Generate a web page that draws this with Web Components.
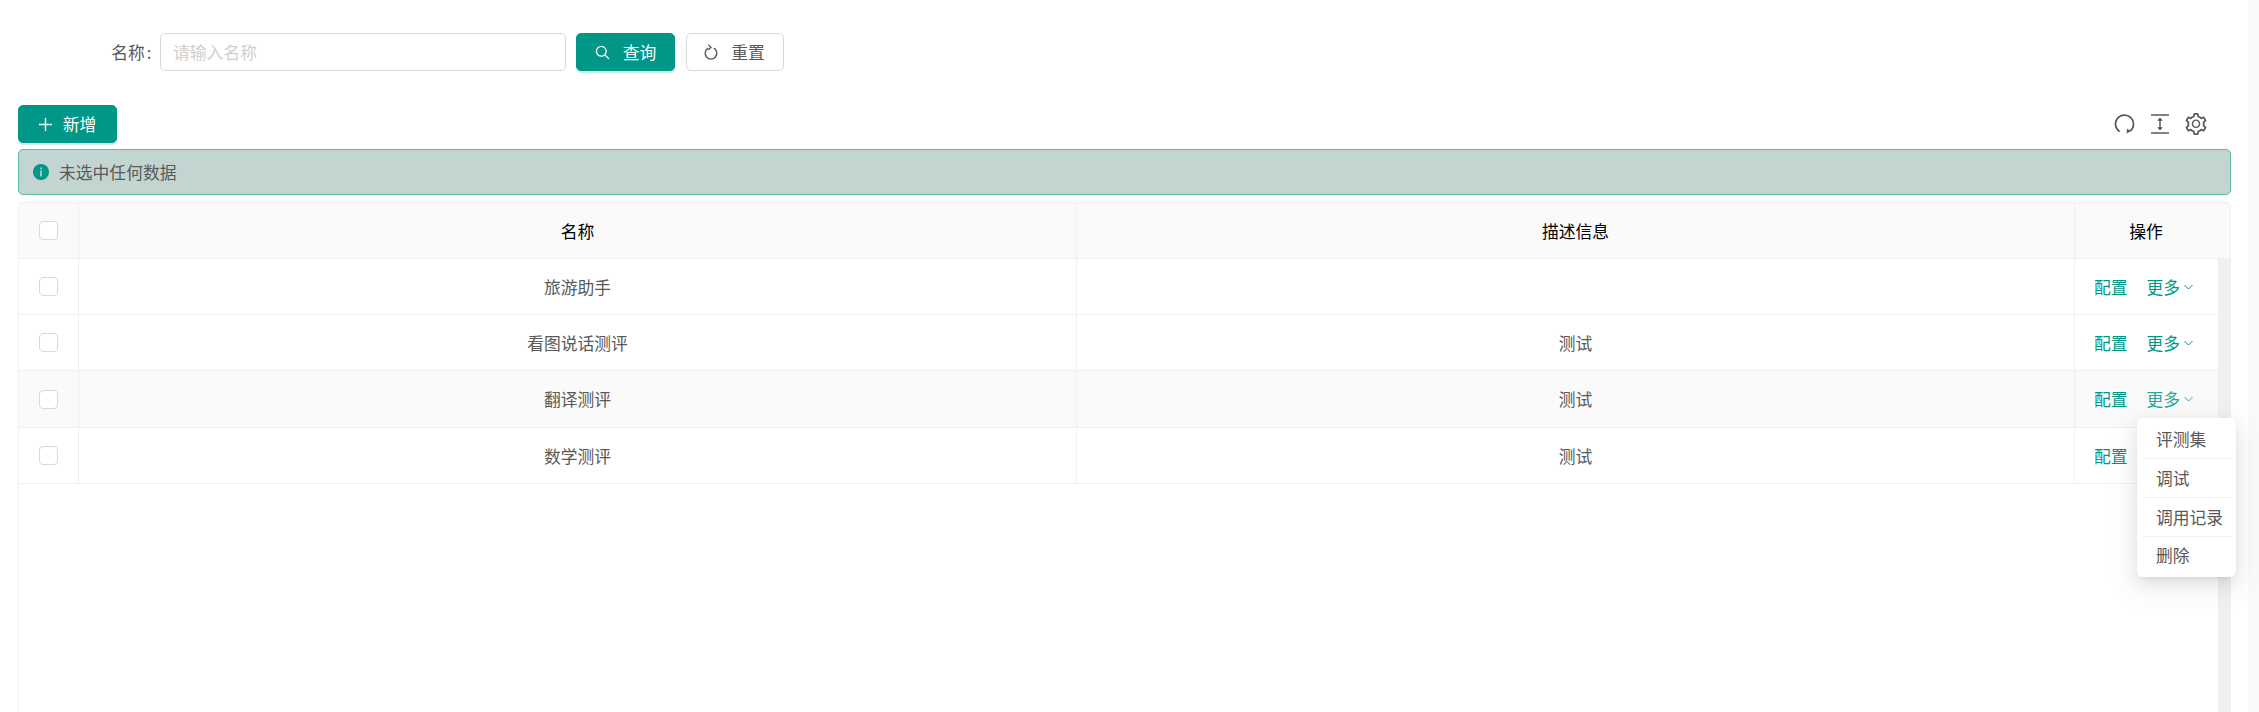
<!DOCTYPE html>
<html lang="zh-CN">
<head>
<meta charset="utf-8">
<title>应用列表</title>
<style>
  html, body { margin: 0; height: 100%; background: #fff; overflow: hidden; }
  body { font: 16.8px "Noto Sans CJK SC", "Liberation Sans", sans-serif; color: #595959; }
</style>
</head>
<body>
<x-page>
  <x-search-form slot="search" label="名称" placeholder="请输入名称">
    <x-btn type="primary" style="gap:13px"><svg slot="icon" width="15" height="15" viewBox="0 0 15 15" fill="none" stroke="currentColor" stroke-width="1.3"><circle cx="6.3" cy="6.3" r="4.9"/><path d="M9.9 9.9l4 4"/></svg>查询</x-btn>
    <x-btn style="width:98px;gap:13px"><svg slot="icon" width="14" height="18" viewBox="0 0 14 18" fill="none" stroke="currentColor" stroke-width="1.4"><path d="M9.8 5.2a5.8 5.8 0 1 1-5.6 0"/><path d="M4.4 1.6l2.6 2.9-2.8 2.2" stroke-width="1.3"/></svg>重置</x-btn>
  </x-search-form>
  <x-toolbar slot="toolbar">
    <x-btn type="primary"><svg slot="icon" width="13" height="13" viewBox="0 0 13 13" fill="none" stroke="currentColor" stroke-width="1.4"><path d="M6.5 0v13M0 6.5h13"/></svg>新增</x-btn>
    <svg slot="actions" width="21" height="20" viewBox="0 0 21 20" fill="none" stroke="#595959"><path stroke-width="1.7" d="M5.6 17.6A9 9 0 1 1 16.2 17"/><path fill="#595959" stroke="none" d="M12.6 19.4l.4-4.6 4 2.2z"/></svg>
    <svg slot="actions" width="18" height="20" viewBox="0 0 18 20" fill="none" stroke="#595959"><path stroke-width="1.6" d="M0 1h18M0 19h18"/><path stroke-width="1.5" d="M9 4.5v11"/><path fill="#595959" stroke="none" d="M9 3.4l2.8 3.4H6.2zM9 16.6l2.8-3.4H6.2z"/></svg>
    <svg slot="actions" width="22" height="22" viewBox="64 64 896 896" fill="#595959"><path d="M924.8 625.7l-65.5-56c3.1-19 4.7-38.4 4.7-57.8s-1.6-38.8-4.7-57.8l65.5-56a32.03 32.03 0 009.3-35.2l-.9-2.6a443.74 443.74 0 00-79.7-137.9l-1.8-2.1a32.12 32.12 0 00-35.1-9.5l-81.3 28.9c-30-24.6-63.5-44-99.7-57.6l-15.7-85a32.05 32.05 0 00-25.8-25.7l-2.7-.5c-52.1-9.4-106.9-9.4-159 0l-2.7.5a32.05 32.05 0 00-25.8 25.7l-15.8 85.4a351.86 351.86 0 00-99 57.4l-81.9-29.1a32 32 0 00-35.1 9.5l-1.8 2.1a446.02 446.02 0 00-79.7 137.9l-.9 2.6c-4.5 12.5-.8 26.5 9.3 35.2l66.3 56.6c-3.1 18.8-4.6 38-4.6 57.1 0 19.2 1.5 38.4 4.6 57.1L99 625.5a32.03 32.03 0 00-9.3 35.2l.9 2.6c18.1 50.4 44.9 96.9 79.7 137.9l1.8 2.1a32.12 32.12 0 0035.1 9.5l81.9-29.1c29.8 24.5 63.1 43.9 99 57.4l15.8 85.4a32.05 32.05 0 0025.8 25.7l2.7.5a449.4 449.4 0 00159 0l2.7-.5a32.05 32.05 0 0025.8-25.7l15.7-85a350 350 0 0099.7-57.6l81.3 28.9a32 32 0 0035.1-9.5l1.8-2.1c34.8-41.1 61.6-87.5 79.7-137.9l.9-2.6c4.5-12.3.8-26.3-9.3-35zM788.3 465.9c2.5 15.1 3.8 30.6 3.8 46.1s-1.3 31-3.8 46.1l-6.6 40.1 74.7 63.9a370.03 370.03 0 01-42.6 73.6L721 702.8l-31.4 25.8c-23.9 19.6-50.5 35-79.3 45.8l-38.1 14.3-17.9 97a377.5 377.5 0 01-85 0l-17.9-97.2-37.8-14.5c-28.5-10.8-55-26.2-78.7-45.7l-31.4-25.9-93.4 33.2c-17-22.9-31.2-47.6-42.6-73.6l75.5-64.5-6.5-40c-2.4-14.9-3.7-30.3-3.7-45.5 0-15.3 1.2-30.6 3.7-45.5l6.5-40-75.5-64.5c11.3-26.1 25.6-50.7 42.6-73.6l93.4 33.2 31.4-25.9c23.7-19.5 50.2-34.9 78.7-45.7l37.9-14.3 17.9-97.2c28.1-3.2 56.8-3.2 85 0l17.9 97 38.1 14.3c28.7 10.8 55.4 26.2 79.3 45.8l31.4 25.8 92.8-32.9c17 22.9 31.2 47.6 42.6 73.6L781.8 426l6.5 39.9zM512 326c-97.2 0-176 78.8-176 176s78.8 176 176 176 176-78.8 176-176-78.8-176-176-176zm83.1 259.1A117.68 117.68 0 01512 619.5c-31.4 0-60.9-12.2-83.1-34.4A117.68 117.68 0 01394.5 502c0-31.4 12.2-60.9 34.4-83.1 22.2-22.3 51.7-34.5 83.1-34.5 31.4 0 60.9 12.2 83.1 34.4A117.68 117.68 0 01629.5 502c0 31.4-12.2 60.9-34.4 83.1z"/></svg>
  </x-toolbar>
  <x-alert slot="alert">未选中任何数据</x-alert>
  <x-table slot="table">
    <x-row name="旅游助手"></x-row>
    <x-row name="看图说话测评" desc="测试"></x-row>
    <x-row name="翻译测评" desc="测试" active></x-row>
    <x-row name="数学测评" desc="测试" covered></x-row>
    <x-menu slot="overlay">
      <x-menu-item>评测集</x-menu-item>
      <x-menu-item>调试</x-menu-item>
      <x-menu-item>调用记录</x-menu-item>
      <x-menu-item>删除</x-menu-item>
    </x-menu>
  </x-table>
</x-page>

<script>
// small helper so each class only has to supply its template string
class Base extends HTMLElement {
  constructor(template) {
    super();
    this.attachShadow({ mode: "open" });
    this.shadowRoot.innerHTML = template;
  }
}

customElements.define("x-page", class extends Base {
  constructor() {
    super(`
      <style>
        :host { display: flex; height: 712px; }
        main { flex: 1; min-width: 0; display: flex; flex-direction: column; padding: 33px 17px 0 18px; }
        aside { width: 11px; background: #fafafa; }
        .search { display: block; margin-bottom: 34px; }
        .toolbar { display: block; margin-bottom: 6px; }
        .alert { display: block; margin-bottom: 7px; }
      </style>
      <main>
        <div class="search"><slot name="search"></slot></div>
        <div class="toolbar"><slot name="toolbar"></slot></div>
        <div class="alert"><slot name="alert"></slot></div>
        <slot name="table"></slot>
      </main>
      <aside></aside>
    `);
  }
});

customElements.define("x-btn", class extends Base {
  constructor() {
    super(`
      <style>
        :host { display: inline-flex; align-items: center; justify-content: center; gap: 11px; box-sizing: border-box;
                width: 99px; height: 38px; border-radius: 5px; border: 1px solid #d9d9d9; background: #fff; color: #595959;
                font-size: 16.8px; line-height: 1; }
        :host([type="primary"]) { background: #009688; border-color: #009688; color: #fff; box-shadow: 0 2px 0 rgba(0,150,136,.2); }
        ::slotted(svg) { flex: none; display: block; }
      </style>
      <slot name="icon"></slot><span><slot></slot></span>
    `);
  }
});

customElements.define("x-search-form", class extends Base {
  constructor() {
    super(`
      <style>
        :host { display: flex; align-items: center; height: 38px; gap: 10.5px; }
        .field { display: flex; align-items: center; gap: 8px; }
        label { width: 133.5px; text-align: right; color: #595959; }
        label span { margin-left: 2px; }
        input { box-sizing: border-box; width: 406px; height: 38px; padding: 0 12.5px; border: 1px solid #d9d9d9; border-radius: 5px;
                font: inherit; color: #595959; outline: none; background: #fff; }
        input::placeholder { color: #cfcfcf; opacity: 1; }
      </style>
      <div class="field"><label><b style="font-weight:400"></b><span>:</span></label><input type="text"></div>
      <slot></slot>
    `);
    this.shadowRoot.querySelector("label b").textContent = this.getAttribute("label");
    this.shadowRoot.querySelector("input").placeholder = this.getAttribute("placeholder");
  }
});

customElements.define("x-toolbar", class extends Base {
  constructor() {
    super(`
      <style>
        :host { display: flex; align-items: center; justify-content: space-between; height: 38px; }
        .actions { display: flex; align-items: center; gap: 16px; padding-right: 24px; }
        ::slotted(svg) { display: block; }
      </style>
      <div><slot></slot></div>
      <div class="actions"><slot name="actions"></slot></div>
    `);
  }
});

customElements.define("x-alert", class extends Base {
  constructor() {
    super(`
      <style>
        :host { display: flex; align-items: center; gap: 10px; box-sizing: border-box; height: 46px; padding: 0 14px;
                background: #c2d5d0; border: 1px solid #5fbba7; border-radius: 5px; color: #595959; }
        svg { display: block; flex: none; }
      </style>
      <svg width="16" height="16" viewBox="0 0 16 16"><circle cx="8" cy="8" r="8" fill="#009688"/><path fill="#c2d5d0" d="M7.2 3.4h1.6v1.8H7.2zM7.2 6.6h1.6v6H7.2z"/></svg>
      <span><slot></slot></span>
    `);
  }
});

const checkbox = `<span class="check"></span>`;
const cellStyles = `
  .check { display: block; box-sizing: border-box; width: 19px; height: 19px; border: 1px solid #d9d9d9; border-radius: 4px; background: #fff; }
  .cell { display: flex; align-items: center; justify-content: center; border-right: 1px solid #f0f0f0; min-width: 0; }
`;

customElements.define("x-table", class extends Base {
  constructor() {
    super(`
      <style>
        :host { display: block; position: relative; flex: 1; min-height: 0; box-sizing: border-box;
                border-left: 1px solid #f0f0f0; border-radius: 5px 5px 0 0; }
        ${cellStyles}
        header { display: grid; grid-template-columns: 60px 998px 998px 1fr; height: 57px; box-sizing: border-box;
                 background: #fafafa; border-top: 1px solid #f0f0f0; border-bottom: 1px solid #f0f0f0; border-right: 1px solid #f0f0f0;
                 border-top-right-radius: 5px; color: #000; }
        header .cell:last-child { border-right: 0; padding-right: 13px; }
        .body { display: flex; height: calc(100% - 57px); }
        .rows { flex: 1; min-width: 0; }
        .gutter { width: 13px; background: #f0f0f0; }
        .overlay { position: absolute; left: 2118px; top: 216px; }
      </style>
      <header>
        <div class="cell">${checkbox}</div>
        <div class="cell">名称</div>
        <div class="cell">描述信息</div>
        <div class="cell">操作</div>
      </header>
      <div class="body">
        <div class="rows"><slot></slot></div>
        <div class="gutter"></div>
      </div>
      <div class="overlay"><slot name="overlay"></slot></div>
    `);
  }
});

customElements.define("x-row", class extends Base {
  constructor() {
    super(`
      <style>
        :host { display: grid; grid-template-columns: 60px 998px 998px 1fr; height: 56px; box-sizing: border-box;
                border-bottom: 1px solid #f0f0f0; background: #fff; color: #595959; }
        :host([active]) { background: #fafafa; height: 57px; }
        ${cellStyles}
        .cell:last-child { border-right: 0; justify-content: flex-start; padding-left: 19px; gap: 19px; }
        .link { color: #009688; display: inline-flex; align-items: center; gap: 4px; }
        :host([active]) .more { color: #26a69a; }
        /* the open menu lies over this link in the last row */
        :host([covered]) .more { display: none; }
        .more svg { display: block; }
      </style>
      <div class="cell">${checkbox}</div>
      <div class="cell name"></div>
      <div class="cell desc"></div>
      <div class="cell">
        <span class="link">配置</span>
        <span class="link more">更多<svg width="9" height="6" viewBox="0 0 9 6" fill="none" stroke="currentColor"><path d="M.5 1l4 4 4-4"/></svg></span>
      </div>
    `);
    this.shadowRoot.querySelector(".name").textContent = this.getAttribute("name") || "";
    this.shadowRoot.querySelector(".desc").textContent = this.getAttribute("desc") || "";
  }
});

customElements.define("x-menu", class extends Base {
  constructor() {
    super(`
      <style>
        :host { display: block; box-sizing: border-box; width: 99px; height: 159px; padding: 5px; background: #fff; border-radius: 6px;
                box-shadow: 0 6px 16px 0 rgba(0,0,0,.08), 0 3px 6px -4px rgba(0,0,0,.12), 0 9px 28px 8px rgba(0,0,0,.05); }
      </style>
      <slot></slot>
    `);
  }
});

customElements.define("x-menu-item", class extends Base {
  constructor() {
    super(`
      <style>
        :host { display: flex; align-items: center; box-sizing: border-box; height: 39px; padding-left: 14px; color: #595959;
                border-bottom: 1px solid #f0f0f0; white-space: nowrap; }
        :host(:first-child) { height: 36px; padding-bottom: 3px; }
        :host(:last-child) { height: 35px; border-bottom: 0; }
      </style>
      <slot></slot>
    `);
  }
});
</script>
</body>
</html>
